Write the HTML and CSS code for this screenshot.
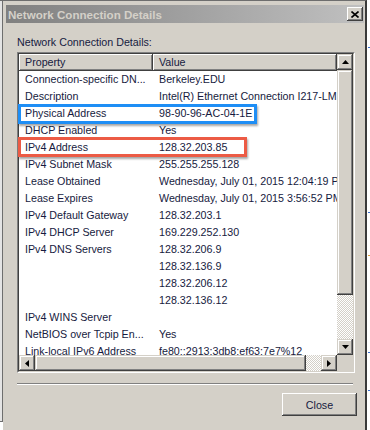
FILE: index.html
```html
<!DOCTYPE html>
<html lang="en">
<head>
  <meta charset="UTF-8" />
  <title>Network Connection Details</title>
  <link rel="stylesheet" href="styles.css">
</head>
<body>
  <div class="desktop">
    <div class="edge"></div>

    <div class="window">
      <div class="titlebar">
        <span class="caption">Network Connection Details</span>
        <span class="close-x">
          <svg width="8" height="7" viewBox="0 0 8 7"><path d="M0.5 0.5 L7.5 6.5 M7.5 0.5 L0.5 6.5" stroke="#000" stroke-width="1.6" fill="none"/></svg>
        </span>
      </div>

      <div class="body">
        <div class="label">Network Connection Details:</div>

        <div class="list">
          <div class="list-in">
            <div class="view">
              <div class="row head">
                <div class="cell prop">Property</div>
                <div class="cell val">Value</div>
              </div>
              <div class="row"><div class="cell prop">Connection-specific DN...</div><div class="cell val">Berkeley.EDU</div></div>
              <div class="row"><div class="cell prop">Description</div><div class="cell val">Intel(R) Ethernet Connection I217-LM</div></div>
              <div class="row"><div class="cell prop">Physical Address</div><div class="cell val">98-90-96-AC-04-1E</div></div>
              <div class="row"><div class="cell prop">DHCP Enabled</div><div class="cell val">Yes</div></div>
              <div class="row"><div class="cell prop">IPv4 Address</div><div class="cell val">128.32.203.85</div></div>
              <div class="row"><div class="cell prop">IPv4 Subnet Mask</div><div class="cell val">255.255.255.128</div></div>
              <div class="row"><div class="cell prop">Lease Obtained</div><div class="cell val">Wednesday, July 01, 2015 12:04:19 PM</div></div>
              <div class="row"><div class="cell prop">Lease Expires</div><div class="cell val">Wednesday, July 01, 2015 3:56:52 PM</div></div>
              <div class="row"><div class="cell prop">IPv4 Default Gateway</div><div class="cell val">128.32.203.1</div></div>
              <div class="row"><div class="cell prop">IPv4 DHCP Server</div><div class="cell val">169.229.252.130</div></div>
              <div class="row"><div class="cell prop">IPv4 DNS Servers</div><div class="cell val">128.32.206.9</div></div>
              <div class="row"><div class="cell prop"></div><div class="cell val">128.32.136.9</div></div>
              <div class="row"><div class="cell prop"></div><div class="cell val">128.32.206.12</div></div>
              <div class="row"><div class="cell prop"></div><div class="cell val">128.32.136.12</div></div>
              <div class="row"><div class="cell prop">IPv4 WINS Server</div><div class="cell val"></div></div>
              <div class="row"><div class="cell prop">NetBIOS over Tcpip En...</div><div class="cell val">Yes</div></div>
              <div class="row"><div class="cell prop">Link-local IPv6 Address</div><div class="cell val">fe80::2913:3db8:ef63:7e7%12</div></div>
            </div>

            <div class="vscroll">
              <div class="sbtn">
                <svg width="7" height="4" viewBox="0 0 7 4"><polygon points="3.5,0 7,4 0,4" fill="#000"/></svg>
              </div>
              <div class="thumb v-thumb"></div>
              <div class="track"></div>
              <div class="sbtn">
                <svg width="7" height="4" viewBox="0 0 7 4"><polygon points="0,0 7,0 3.5,4" fill="#000"/></svg>
              </div>
            </div>

            <div class="hscroll">
              <div class="sbtn">
                <svg width="4" height="7" viewBox="0 0 4 7"><polygon points="4,0 4,7 0,3.5" fill="#000"/></svg>
              </div>
              <div class="thumb h-thumb"></div>
              <div class="track"></div>
              <div class="sbtn">
                <svg width="4" height="7" viewBox="0 0 4 7"><polygon points="0,0 4,3.5 0,7" fill="#000"/></svg>
              </div>
            </div>

            <div class="corner"></div>
          </div>

          <!-- annotation boxes drawn over the screenshot -->
          <div class="mark mark-blue"></div>
          <div class="mark mark-red"></div>
        </div>

        <div class="sep"></div>

        <div class="actions">
          <button class="btn">Close</button>
        </div>
      </div>
    </div>

    <svg class="behind" width="3" height="430" viewBox="0 0 3 430">
      <rect x="1" y="47" width="2" height="1" fill="#3a6fd0"/>
      <rect x="1" y="212" width="2" height="1" fill="#3a6fd0"/>
      <rect x="1" y="255" width="2" height="1" fill="#e0a040"/>
      <rect x="1" y="352" width="2" height="1" fill="#3a6fd0"/>
      <rect x="1" y="390" width="2" height="1" fill="#3a6fd0"/>
    </svg>
  </div>
</body>
</html>
```

FILE: styles.css
```css
body {
  margin: 0;
  background: #fff;
  font-family: "Liberation Sans", Arial, sans-serif;
  font-size: 10.7px;
  color: #161a40;
}

.desktop {
  display: flex;
  width: 370px;
  height: 430px;
  overflow: hidden;
}

.edge {
  width: 2px;
  height: 420px;
  background: #e4e4e4;
  border-top: 1px solid #6e6e6e;
  border-right: 1px solid #6e6e6e;
  border-bottom: 1px solid #6e6e6e;
}

.window {
  width: 358px;
  padding: 4px 1px 0 3px;
  border-top: 1px solid #6e6e6e;
  border-right: 2px solid #3a3a3a;
  background: #d4d0c8;
}

.behind {
  display: block;
  flex: none;
}

/* title bar (inactive caption) */
.titlebar {
  height: 18px;
  display: flex;
  align-items: center;
  justify-content: space-between;
  padding-left: 2px;
  background: linear-gradient(to right, #808080, #c0c0c0);
}

.caption {
  font-weight: bold;
  font-size: 11.6px;
  color: #d4d0c8;
}

.close-x {
  width: 16px;
  height: 14px;
  margin-right: 1px;
  display: flex;
  align-items: center;
  justify-content: center;
  background: #d4d0c8;
  box-shadow: inset -1px -1px #404040, inset 1px 1px #fff, inset -2px -2px #808080;
}

.body {
  padding: 13px 0 0 11px;
}

.label {
  line-height: 13px;
}

/* list view */
.list {
  position: relative;
  width: 338px;
  margin-top: 3px;
  border: 1px solid;
  border-color: #808080 #fff #fff #808080;
  box-sizing: border-box;
}

.list-in {
  height: 317px;
  display: grid;
  grid-template-columns: 1fr 16px;
  grid-template-rows: 1fr 16px;
  border: 1px solid;
  border-color: #404040 #d4d0c8 #d4d0c8 #404040;
  background: #fff;
}

.view {
  overflow: hidden;
}

.row {
  display: flex;
  height: 17px;
  line-height: 17px;
  white-space: nowrap;
}

.cell {
  box-sizing: border-box;
  padding-left: 6px;
  overflow: hidden;
}

.cell.prop {
  width: 134px;
  flex: none;
}

.cell.val {
  flex: 1;
}

.head .cell {
  background: #d4d0c8;
  box-shadow: inset -1px -1px #404040, inset 1px 1px #fff, inset -2px -2px #808080;
}

/* scrollbars */
.vscroll {
  display: flex;
  flex-direction: column;
}

.hscroll {
  display: flex;
}

.sbtn,
.thumb {
  background: #d4d0c8;
  box-shadow: inset -1px -1px #404040, inset 1px 1px #d4d0c8, inset -2px -2px #808080, inset 2px 2px #fff;
}

.sbtn {
  width: 16px;
  height: 16px;
  flex: none;
  display: flex;
  align-items: center;
  justify-content: center;
}

.v-thumb {
  height: 225px;
  flex: none;
}

.h-thumb {
  width: 271px;
  flex: none;
}

.track {
  flex: 1;
  background: repeating-conic-gradient(#d4d0c8 0 25%, #fff 0 50%) 0 0 / 2px 2px;
}

.corner {
  background: #d4d0c8;
}

.mark {
  position: absolute;
  left: 0;
  box-sizing: border-box;
  border: 3px solid;
  box-shadow: 1px 2px 2px rgba(0, 0, 0, 0.35);
}

.mark-blue {
  top: 51px;
  width: 239px;
  height: 20px;
  border-color: #1e8ef5;
}

.mark-red {
  top: 84px;
  width: 229px;
  height: 20px;
  border-color: #ec5b45;
}

.sep {
  width: 336px;
  margin-top: 10px;
  border-top: 1px solid #808080;
  border-bottom: 1px solid #fff;
}

.actions {
  display: flex;
  justify-content: flex-end;
  margin-top: 8px;
  padding-right: 7px;
}

.btn {
  width: 75px;
  height: 23px;
  padding: 0;
  border: 0;
  font: inherit;
  color: #161a40;
  background: #d4d0c8;
  box-shadow: inset -1px -1px #404040, inset 1px 1px #fff, inset -2px -2px #808080;
}
```
